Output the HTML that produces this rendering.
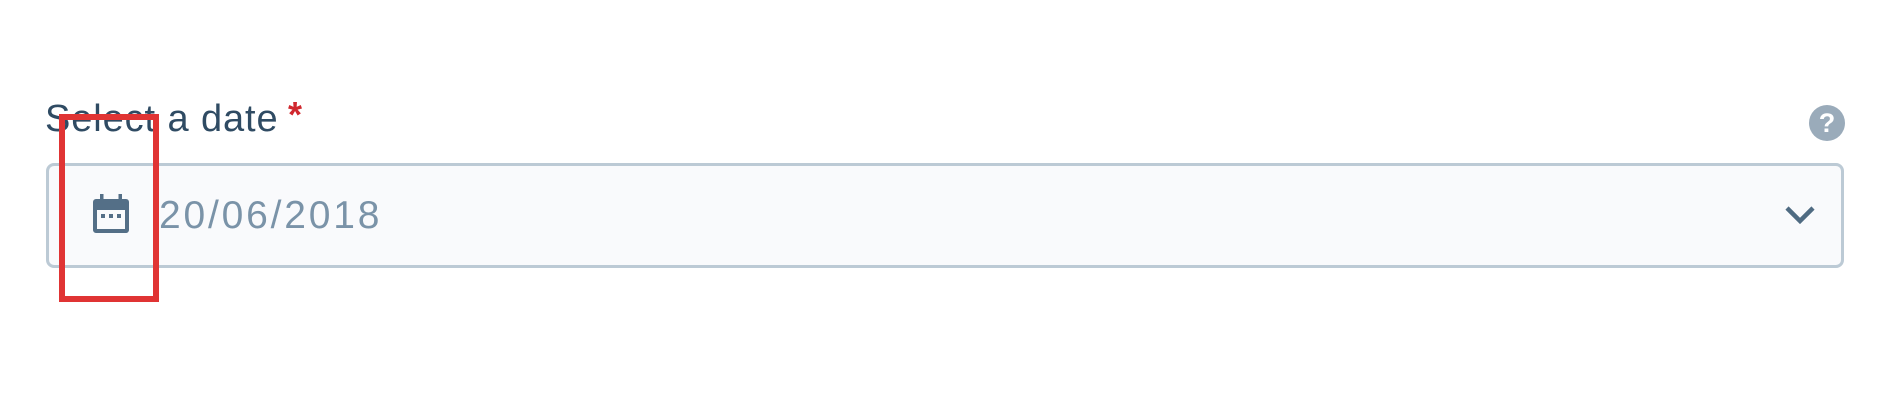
<!DOCTYPE html>
<html><head><style>
body{margin:0;width:1890px;height:420px;background:#fff;position:relative;overflow:hidden;font-family:"Liberation Sans",sans-serif}
.lbl{position:absolute;left:45px;top:96px;font-size:38px;line-height:46px;color:#2f4b63;white-space:nowrap;letter-spacing:0.9px}
.ast{position:absolute;left:288px;top:96px;font-size:36px;line-height:38px;color:#d0282e;font-weight:bold}
.box{position:absolute;left:46px;top:163px;width:1792px;height:99px;border:3px solid #bccad5;border-radius:8px;background:#f9fafc}
.date{position:absolute;left:159px;top:193px;font-size:39px;line-height:46px;color:#7a93a8;letter-spacing:2.8px}
.q{position:absolute;left:1809px;top:105px;width:36px;height:36px;border-radius:50%;background:#9aabba;color:#fff;font-weight:bold;font-size:27px;line-height:36px;text-align:center}
.red{position:absolute;left:59px;top:114px;width:88px;height:176px;border:6px solid #e03434}
</style></head><body>
<div class="lbl">Select a date</div>
<div class="ast">*</div>
<div class="q">?</div>
<div class="box"></div>
<svg style="position:absolute;left:93px;top:194px" width="37" height="40" viewBox="0 0 37 40">
<rect x="0" y="5" width="36" height="34" rx="3" fill="#546f87"/>
<rect x="4" y="16" width="28" height="19" fill="#f9fafc"/>
<rect x="7" y="0" width="3.5" height="7" fill="#546f87"/>
<rect x="25.5" y="0" width="3.5" height="7" fill="#546f87"/>
<rect x="8" y="20" width="4" height="4" fill="#546f87"/>
<rect x="16" y="20" width="4" height="4" fill="#546f87"/>
<rect x="24" y="20" width="4" height="4" fill="#546f87"/>
</svg>
<div class="date">20/06/2018</div>
<svg style="position:absolute;left:1784px;top:204px" width="32" height="22" viewBox="0 0 32 22">
<path d="M3 4 L16 17 L29 4" fill="none" stroke="#4f6b82" stroke-width="4.5"/>
</svg>
<div class="red"></div>
</body></html>
